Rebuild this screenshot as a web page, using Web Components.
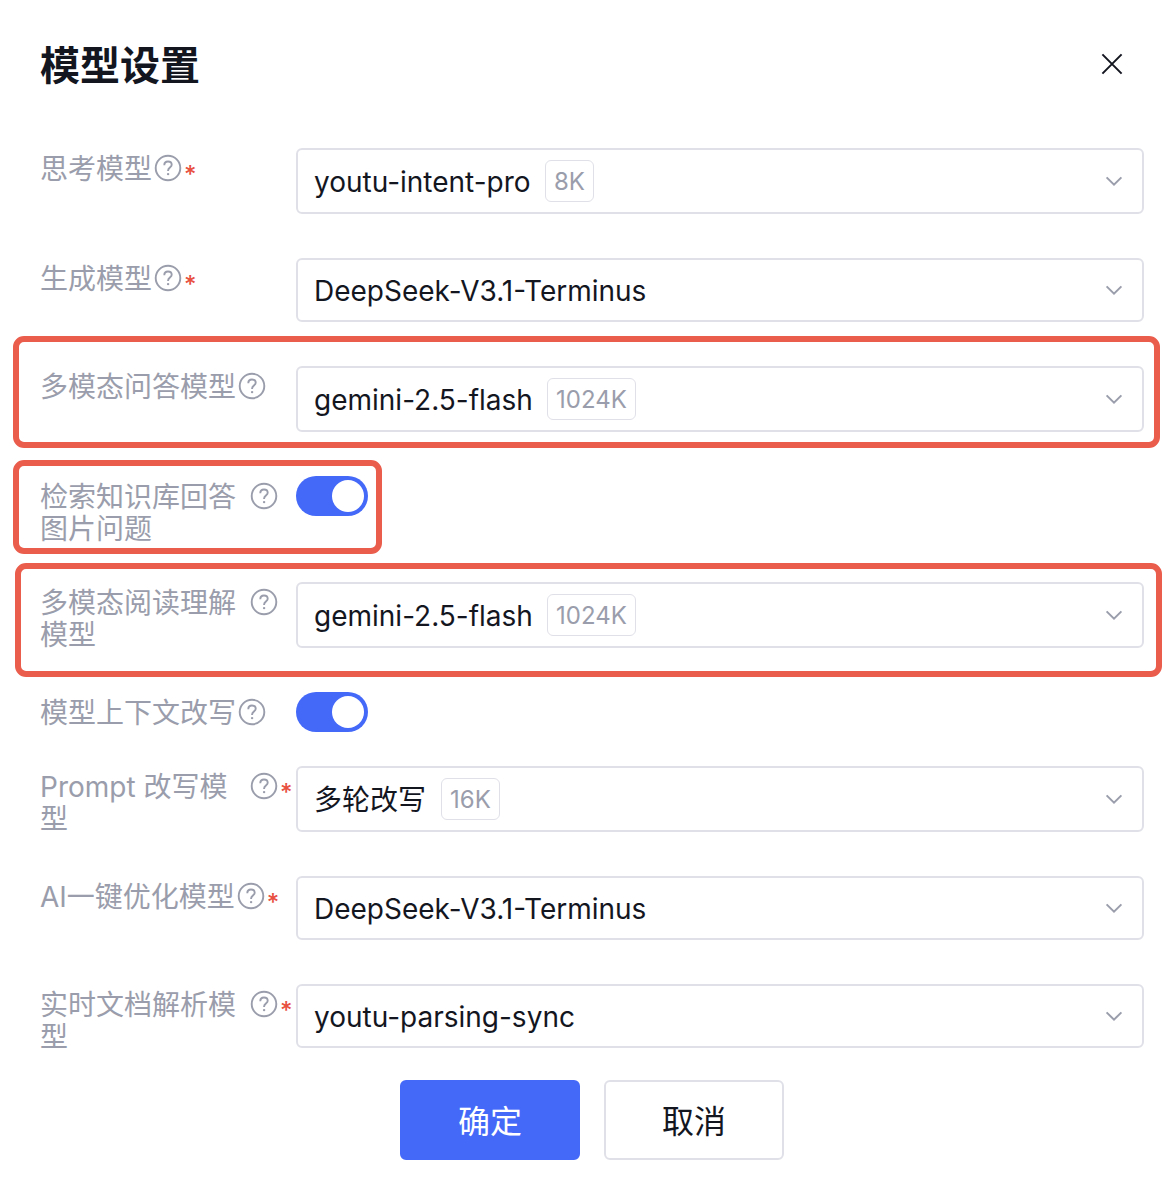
<!DOCTYPE html>
<html lang="zh-CN">
<head>
<meta charset="utf-8">
<meta name="viewport" content="width=device-width, initial-scale=1">
<title>模型设置</title>
<style>
  body {
    margin: 0;
    background: #fff;
    color: #14161f;
    font: 400 28px/32px Inter, "Noto Sans CJK SC", sans-serif;
    --muted: #9a9dab;
    --line: #e0e1e8;
    --brand: #4469f9;
    --danger: #e8503f;
    --mark: #ea5c4b;
  }
</style>
</head>
<body>
<settings-dialog heading="模型设置">
  <select-field label="思考模型" value="youtu-intent-pro" tag="8K" required></select-field>
  <select-field label="生成模型" value="DeepSeek-V3.1-Terminus" required></select-field>
  <mark-frame style="--inset: -30px -16px 28px -27px">
    <select-field label="多模态问答模型" value="gemini-2.5-flash" tag="1024K"></select-field>
  </mark-frame>
  <mark-frame style="--inset: -16px auto 28px -27px; --frame-width: 369px">
    <switch-field label="检索知识库回答图片问题" checked></switch-field>
  </mark-frame>
  <mark-frame style="--inset: -19px -18px 15px -25px">
    <select-field label="多模态阅读理解模型" value="gemini-2.5-flash" tag="1024K"></select-field>
  </mark-frame>
  <switch-field label="模型上下文改写" checked></switch-field>
  <select-field label="Prompt 改写模型" value="多轮改写" tag="16K" required></select-field>
  <select-field label="AI一键优化模型" value="DeepSeek-V3.1-Terminus" required></select-field>
  <select-field label="实时文档解析模型" value="youtu-parsing-sync" required last></select-field>
  <action-button slot="footer" primary>确定</action-button>
  <action-button slot="footer">取消</action-button>
</settings-dialog>

<script>
  class SettingsDialog extends HTMLElement {
    connectedCallback() {
      this.attachShadow({ mode: 'open' }).innerHTML = `
        <style>
          :host { display: block; padding: 36px 30px 20px 40px; }
          header { display: flex; align-items: flex-start; justify-content: space-between; padding: 0 16px 52px 0; }
          h1 { margin: 0; font-size: 40px; line-height: 60px; font-weight: 600; }
          .close { display: flex; padding: 16px 4px; border: 0; background: none; color: inherit; cursor: pointer; }
          .fields { display: flex; flex-direction: column; }
          footer { display: flex; justify-content: center; gap: 24px; padding-top: 27px; }
        </style>
        <section role="dialog" aria-labelledby="title">
          <header>
            <h1 id="title"></h1>
            <button class="close" type="button" aria-label="关闭">
              <svg width="24" height="24" viewBox="0 0 24 24" fill="none" stroke="currentColor" stroke-width="2"><path d="M2.4 2.4 21.6 21.6M21.6 2.4 2.4 21.6"/></svg>
            </button>
          </header>
          <div class="fields"><slot></slot></div>
          <footer><slot name="footer"></slot></footer>
        </section>`;
      this.shadowRoot.querySelector('h1').textContent = this.getAttribute('heading');
    }
  }

  class HelpIcon extends HTMLElement {
    connectedCallback() {
      this.attachShadow({ mode: 'open' }).innerHTML = `
        <style>
          :host { display: block; flex: none; height: 28px; color: var(--muted); }
          button { display: block; padding: 0; border: 0; background: none; color: inherit; cursor: help; }
          svg { display: block; }
        </style>
        <button type="button" aria-label="帮助">
          <svg width="28" height="28" viewBox="0 0 28 28" fill="none" stroke="currentColor" stroke-width="1.9">
            <circle cx="14" cy="14" r="12.3"/>
            <path d="M10.3 11.2C10.3 9 11.8 7.5 14 7.5s3.7 1.4 3.7 3.3c0 2.6-3.6 3-3.6 5.6v.6"/>
            <circle cx="14.1" cy="20.1" r="1.2" fill="currentColor" stroke="none"/>
          </svg>
        </button>`;
    }
  }

  /* Shared row: caption column on the left, the control on the right. */
  class SettingField extends HTMLElement {
    connectedCallback() {
      this.attachShadow({ mode: 'open' }).innerHTML = `
        <style>
          :host { display: flex; align-items: flex-start; }
          .caption { flex: none; box-sizing: border-box; width: 256px; display: flex; align-items: flex-start; padding: 5px 0 37px; color: var(--muted); }
          label { max-width: 208px; margin-right: 2px; }
          help-icon { padding-top: 1px; }
          .required { margin-left: 2px; color: var(--danger); font-size: 24px; font-weight: 500; line-height: 44px; }
          .control { flex: 1; min-width: 0; padding-bottom: 44px; }
          :host([last]) .caption, :host([last]) .control { padding-bottom: 0; }
          ${this.controlStyle}
        </style>
        <div class="caption">
          <label for="control"></label><help-icon></help-icon>
          ${this.hasAttribute('required') ? '<span class="required">*</span>' : ''}
        </div>
        <div class="control">${this.controlMarkup}</div>`;
      this.shadowRoot.querySelector('label').textContent = this.getAttribute('label');
    }
  }

  class SelectField extends SettingField {
    get controlStyle() {
      return `
        .box { display: flex; align-items: center; gap: 14px; padding: 10px 16px; border: 2px solid var(--line); border-radius: 6px; }
        select { appearance: none; margin: 0; padding: 2px 0 0; border: 0; outline: 0; background: none; color: inherit; font: inherit; line-height: 38px; }
        .tag { box-sizing: border-box; padding: 2px 8px 0; border: 1px solid var(--line); border-radius: 6px; color: var(--muted); font-size: 24px; line-height: 38px; }
        svg { flex: none; margin-left: auto; color: var(--muted); }`;
    }
    get controlMarkup() {
      const value = this.getAttribute('value');
      const tag = this.getAttribute('tag');
      return `
        <div class="box">
          <select id="control"><option>${value}</option></select>
          ${tag ? `<span class="tag">${tag}</span>` : ''}
          <svg width="24" height="24" viewBox="0 0 24 24" fill="none" stroke="currentColor" stroke-width="2"><path d="m4.6 8.4 7.4 7.2 7.4-7.2"/></svg>
        </div>`;
    }
  }

  class SwitchField extends SettingField {
    get controlStyle() {
      return `
        .control { padding-bottom: 34px; }
        input { appearance: none; display: flex; box-sizing: border-box; width: 72px; height: 40px; margin: 0; padding: 4px; border-radius: 20px; background: var(--line); cursor: pointer; }
        input::before { content: ""; width: 32px; height: 32px; border-radius: 50%; background: #fff; }
        input:checked { justify-content: flex-end; background: var(--brand); }`;
    }
    get controlMarkup() {
      return `<input id="control" type="checkbox" role="switch" ${this.hasAttribute('checked') ? 'checked' : ''}>`;
    }
  }

  /* Red call-out frame drawn over the row it wraps. */
  class MarkFrame extends HTMLElement {
    connectedCallback() {
      this.attachShadow({ mode: 'open' }).innerHTML = `
        <style>
          :host { display: block; position: relative; }
          .frame { position: absolute; box-sizing: border-box; inset: var(--inset); width: var(--frame-width, auto); border: 6px solid var(--mark); border-radius: 11px; pointer-events: none; }
        </style>
        <slot></slot><div class="frame"></div>`;
    }
  }

  class ActionButton extends HTMLElement {
    connectedCallback() {
      this.attachShadow({ mode: 'open' }).innerHTML = `
        <style>
          :host { display: block; }
          button { box-sizing: border-box; min-width: 180px; padding: 20px 32px 16px; border: 2px solid var(--line); border-radius: 6px; background: #fff; color: inherit; font: inherit; font-size: 32px; line-height: 40px; cursor: pointer; }
          :host([primary]) button { border-color: var(--brand); background: var(--brand); color: #fff; }
        </style>
        <button type="button"><slot></slot></button>`;
    }
  }

  customElements.define('help-icon', HelpIcon);
  customElements.define('select-field', SelectField);
  customElements.define('switch-field', SwitchField);
  customElements.define('mark-frame', MarkFrame);
  customElements.define('action-button', ActionButton);
  customElements.define('settings-dialog', SettingsDialog);
</script>
</body>
</html>
